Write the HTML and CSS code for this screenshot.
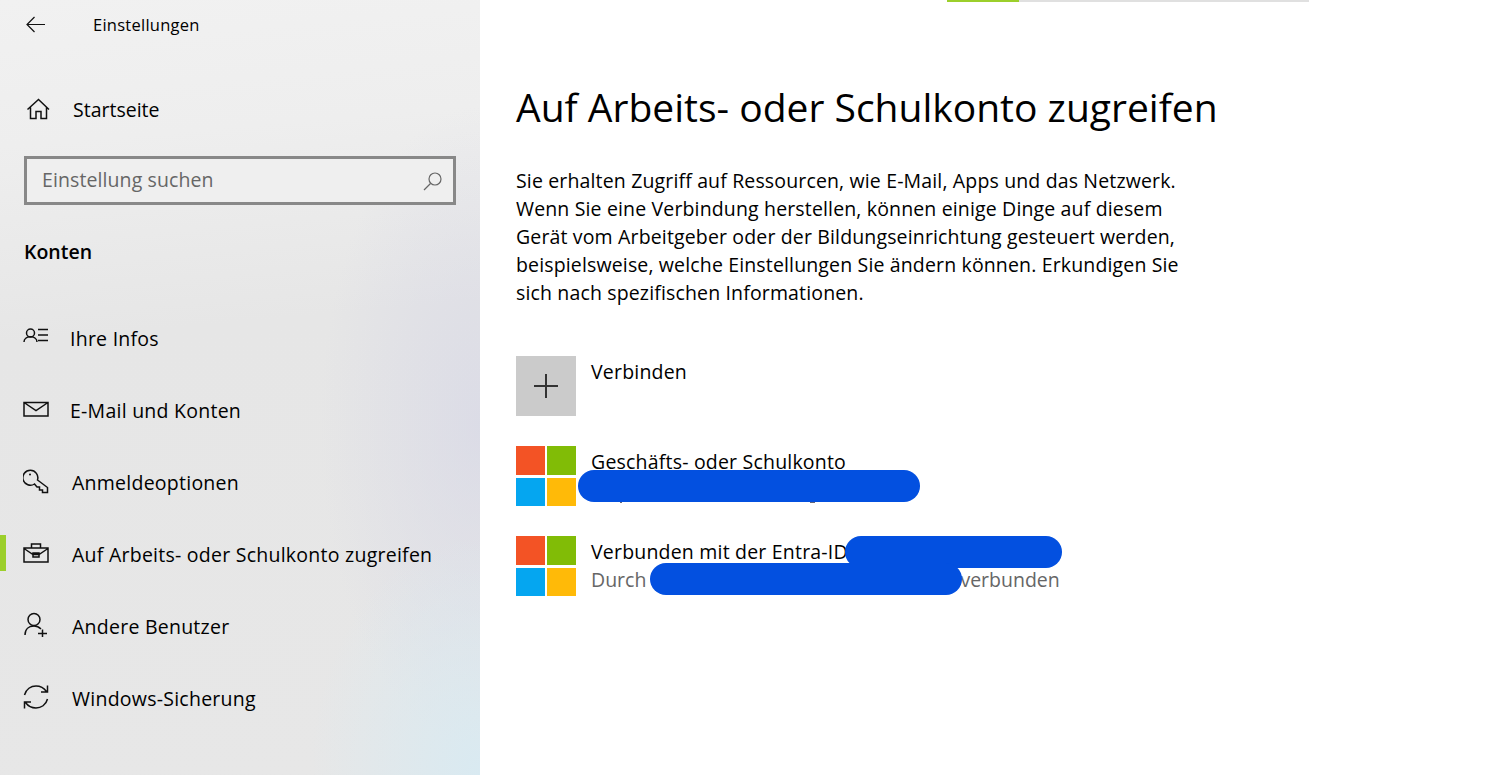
FILE: index.html
```html
<!DOCTYPE html>
<html lang="de">
	<head>
		<meta charset="UTF-8">
		<title>Einstellungen</title>
		<link rel="stylesheet" href="styles.css">
	</head>

	<body>
		<div class="sidebar">
			<div class="titlebar">
				<svg class="back" width="22" height="18" viewBox="0 0 22 18"><path d="M20 8.500H2M9.500 1 2 8.500 9.500 16"/></svg>
				<span class="app-title">Einstellungen</span>
			</div>

			<div class="home">
				<svg class="icon" width="24" height="24" viewBox="0 0 24 24"><path d="M1.500 12.500 12.500 2.500 23 12.500M4.500 10.500V21.500H10V14.500H15V21.500H20.500V10.500"/></svg>
				<span>Startseite</span>
			</div>

			<div class="search">
				<span class="search-text">Einstellung suchen</span>
				<svg width="20" height="20" viewBox="0 0 20 20"><circle cx="12" cy="8" r="6"/><path d="M7.500 12.500 1 19"/></svg>
			</div>

			<h2>Konten</h2>

			<ul class="nav">
				<li class="nudge">
					<svg class="icon" width="26" height="20" viewBox="0 0 26 20"><circle cx="7.500" cy="6" r="4"/><path d="M1 15c0-7 13-7 13 0M15 2.500H25M15 8H25M15 13.500H25"/></svg>
					<span>Ihre Infos</span>
				</li>
				<li class="nudge">
					<svg class="icon" width="26" height="20" viewBox="0 0 26 20"><path d="M1 3.500H25V17H1ZM1 3.500 13 11.500 25 3.500"/></svg>
					<span>E-Mail und Konten</span>
				</li>
				<li>
					<svg class="icon" width="26" height="26" viewBox="0 0 26 26"><path d="M14.500 12 24.500 19.500V24.500H19.500V22H16.500V19H14L11.500 16A7.500 7.500 0 1 1 14.500 12Z"/><circle cx="7" cy="6.500" r="1" class="solid"/></svg>
					<span>Anmeldeoptionen</span>
				</li>
				<li class="active">
					<svg class="icon" width="26" height="20" viewBox="0 0 26 20"><path d="M1 5H25V19H1ZM1 5.500 10 11.500H16L25 5.500M10 10H16V14H10ZM8.500 5V1H17.500V5"/></svg>
					<span>Auf Arbeits- oder Schulkonto zugreifen</span>
				</li>
				<li>
					<svg class="icon" width="26" height="26" viewBox="0 0 26 26"><circle cx="11" cy="7.500" r="6"/><path d="M2 23c0-6 4-9 9-9 3 0 5 1 7 3M15 21.500H24M19.500 17.500V25"/></svg>
					<span>Andere Benutzer</span>
				</li>
				<li>
					<svg class="icon" width="26" height="26" viewBox="0 0 26 26"><path d="M1.500 11C3 5 8 2 13 2c4.500 0 8 2 10.500 5.500M24.500 1.500V8H18M24.500 15C23 21 18 24 13 24c-4.500 0-8-2-10.500-5.500M1.500 24.500V18H8"/></svg>
					<span>Windows-Sicherung</span>
				</li>
			</ul>
		</div>

		<div class="main">
			<div class="progress"><div class="progress-done"></div></div>

			<h1>Auf Arbeits- oder Schulkonto zugreifen</h1>

			<p class="intro">Sie erhalten Zugriff auf Ressourcen, wie E-Mail, Apps und das Netzwerk.<br>Wenn Sie eine Verbindung herstellen, können einige Dinge auf diesem<br>Gerät vom Arbeitgeber oder der Bildungseinrichtung gesteuert werden,<br>beispielsweise, welche Einstellungen Sie ändern können. Erkundigen Sie<br>sich nach spezifischen Informationen.</p>

			<div class="accounts">
				<div class="account">
					<div class="add-tile">
						<svg width="26" height="26" viewBox="0 0 26 26"><path d="M13 1V25M1 13H25"/></svg>
					</div>
					<div class="account-text">Verbinden</div>
				</div>

				<div class="account">
					<div class="ms-logo"><i class="red"></i><i class="green"></i><i class="blue"></i><i class="yellow"></i></div>
					<div class="account-text">
						Geschäfts- oder Schulkonto
						<span class="speck speck-a"></span>
						<span class="speck speck-b"></span>
						<span class="blot blot-a"></span>
					</div>
				</div>

				<div class="account">
					<div class="ms-logo"><i class="red"></i><i class="green"></i><i class="blue"></i><i class="yellow"></i></div>
					<div class="account-text">
						Verbunden mit der Entra-ID
						<div class="sub">Durch<span class="gap"></span>verbunden</div>
						<span class="blot blot-b"></span>
						<span class="blot blot-c"></span>
					</div>
				</div>
			</div>
		</div>
	</body>
</html>
```

FILE: styles.css
```css
* {
	box-sizing: border-box;
}

html, body {
	height: 100%;
}

body {
	margin: 0;
	display: flex;
	overflow: hidden;
	background: white;
	color: #000;
	font-family: "Open Sans", "Noto Sans", sans-serif;
	font-size: 19px;
}

svg {
	fill: none;
	stroke: #111;
	stroke-width: 1.5;
	flex: none;
}

.sidebar {
	position: relative;
	width: 480px;
	flex: none;
	background:
		radial-gradient(ellipse 170px 240px at 100% 100%, rgba(216, 234, 242, 0.95), transparent),
		radial-gradient(ellipse 160px 320px at 100% 55%, rgba(212, 213, 230, 0.6), transparent),
		linear-gradient(175deg, #f1f1f1 0%, #eeeeee 18%, #e6e6e6 42%, #e7e7e7 100%);
}

.titlebar {
	display: flex;
	align-items: center;
	height: 49px;
	padding-left: 25px;
}

.back {
	stroke-width: 1.2;
}

.app-title {
	margin-left: 46px;
	font-size: 16.500px;
	letter-spacing: 0.25px;
}

.home {
	display: flex;
	align-items: center;
	height: 40px;
	margin-top: 40px;
	padding-left: 26px;
}

.home span {
	margin-left: 23px;
	font-size: 19.500px;
}

.search {
	display: flex;
	align-items: center;
	justify-content: space-between;
	height: 49px;
	margin: 27px 24px 0;
	padding: 0 10px 0 15px;
	border: 3px solid #888;
	background: #efefef;
	color: #666;
	font-size: 19.500px;
}

.search-text {
	margin-bottom: 2px;
	letter-spacing: 0.1px;
}

.search svg {
	stroke: #666;
	stroke-width: 1.2;
}

h2 {
	margin: 27px 0 0 24px;
	font-size: 19.500px;
	font-weight: 600;
	line-height: 40px;
}

.nav {
	list-style: none;
	margin: 30px 0 0;
	padding: 0;
}

.nav li {
	display: flex;
	align-items: center;
	height: 72px;
	padding-left: 23px;
	position: relative;
}

.nav .icon {
	margin-right: 23px;
	margin-bottom: 2px;
}

.nav li span {
	font-size: 19.500px;
	letter-spacing: 0.25px;
}

.nav li.nudge span {
	margin-left: -2px;
}

.nav li.active::before {
	content: '';
	position: absolute;
	left: 0;
	top: 17px;
	width: 6px;
	height: 36px;
	background: #9ccf2b;
}

.solid {
	fill: #111;
	stroke: none;
}

.main {
	position: relative;
	flex: 1;
	padding-left: 36px;
}

.progress {
	position: absolute;
	left: 467px;
	top: 0;
	width: 362px;
	height: 2px;
	background: #e0e0e0;
}

.progress-done {
	width: 72px;
	height: 2px;
	background: #9ccf2b;
}

h1 {
	margin: 78px 0 0;
	font-size: 39px;
	font-weight: 400;
	line-height: 58px;
}

.intro {
	margin: 31px 0 0;
	font-size: 19.500px;
	line-height: 28px;
	letter-spacing: 0.15px;
}

.accounts {
	margin-top: 49px;
}

.account {
	display: flex;
	margin-bottom: 30px;
}

.add-tile {
	display: flex;
	align-items: center;
	justify-content: center;
	width: 60px;
	height: 60px;
	background: #cbcbcb;
}

.add-tile svg {
	stroke: #333;
	stroke-width: 2;
}

.ms-logo {
	display: grid;
	grid-template-columns: 28.500px 29px;
	grid-template-rows: 28.500px 28.500px;
	column-gap: 2.500px;
	row-gap: 3px;
	width: 60px;
	height: 60px;
	flex: none;
}

.red { background: #f35325; }
.green { background: #81bc06; }
.blue { background: #05a6f0; }
.yellow { background: #ffba08; }

.account-text {
	position: relative;
	margin-left: 15px;
	padding-top: 1px;
	font-size: 19.500px;
	line-height: 30px;
	letter-spacing: 0.2px;
}

.sub {
	margin-top: -1px;
	color: #666;
	line-height: 28px;
	white-space: nowrap;
	letter-spacing: 0;
}

.gap {
	display: inline-block;
	width: 314px;
}

.blot {
	position: absolute;
	height: 31.500px;
	border-radius: 16px;
	background: #0350e0;
}

.blot-a {
	left: -13px;
	top: 24px;
	width: 342px;
}

.blot-b {
	left: 254px;
	top: 0;
	width: 217px;
}

.blot-c {
	left: 59px;
	top: 27px;
	width: 312px;
}

/* bits of the hidden line that stick out under the blot */
.speck {
	position: absolute;
	top: 54px;
	height: 3px;
	background: #667;
}

.speck-a {
	left: 29px;
	width: 2px;
}

.speck-b {
	left: 219px;
	width: 5px;
}
```
